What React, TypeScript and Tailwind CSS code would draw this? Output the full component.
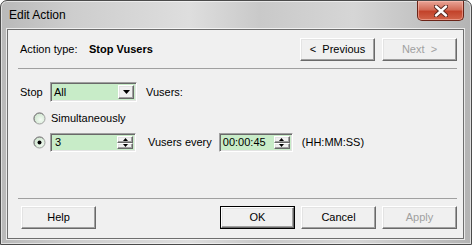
import React from 'react'
import clsx from 'clsx'

const raised =
    'border border-t-white border-l-white border-b-[#696969] border-r-[#696969] shadow-[inset_-1px_-1px_0_#a0a0a0,inset_1px_1px_0_#e3e3e3]'
const sunken =
    'border border-t-[#a0a0a0] border-l-[#a0a0a0] border-b-white border-r-white shadow-[inset_1px_1px_0_#696969,inset_-1px_-1px_0_#e3e3e3]'

function Btn({ children, disabled, def, className }: { children: React.ReactNode; disabled?: boolean; def?: boolean; className?: string }) {
    return (
        <div className={clsx('h-[23px] w-[75px] bg-[#f0f0f0]', def && 'border border-black', className)}>
            <div className={clsx('w-full h-full flex items-center justify-center text-[11px]', raised, disabled ? 'text-[#a0a0a0]' : 'text-black')}>
                {children}
            </div>
        </div>
    )
}

function SpinButtons() {
    return (
        <div className='flex flex-col w-[16px] h-full'>
            <div className={clsx('flex-1 flex items-center justify-center bg-[#f0f0f0]', raised)}>
                <svg width='5' height='3' viewBox='0 0 5 3'><path d='M2.5 0 L5 3 L0 3 Z' fill='#000' /></svg>
            </div>
            <div className={clsx('flex-1 flex items-center justify-center bg-[#f0f0f0]', raised)}>
                <svg width='5' height='3' viewBox='0 0 5 3'><path d='M0 0 L5 0 L2.5 3 Z' fill='#000' /></svg>
            </div>
        </div>
    )
}

function Radio({ checked }: { checked?: boolean }) {
    return (
        <svg width='13' height='13' viewBox='0 0 13 13'>
            <defs>
                <radialGradient id={checked ? 'rg1' : 'rg0'} cx='0.6' cy='0.6' r='0.6'>
                    <stop offset='0' stopColor='#f4fbf4' />
                    <stop offset='1' stopColor='#cfe6cf' />
                </radialGradient>
            </defs>
            <circle cx='6.5' cy='6.5' r='5.5' fill={`url(#${checked ? 'rg1' : 'rg0'})`} stroke='#a0a0a0' strokeWidth='1' />
            <path d='M2.6 10.4 A5.5 5.5 0 0 1 10.4 2.6' fill='none' stroke='#808080' strokeWidth='1' />
            {checked && <circle cx='6.5' cy='6.5' r='2' fill='#000' />}
        </svg>
    )
}

function CloseButton() {
    return (
        <div className='w-[47px] h-[20px] rounded-b-[5px] border border-[#6b2418] border-t-0 bg-[linear-gradient(to_bottom,#e9a597_0%,#d36c58_45%,#c3432b_55%,#d1644a_100%)] flex items-center justify-center shadow-[inset_0_0_0_1px_rgba(255,200,190,0.5)]'>
            <svg width='14' height='12' viewBox='0 0 14 12'>
                <path d='M2 1.5 L12 10.5 M12 1.5 L2 10.5' stroke='#5a2a22' strokeWidth='4.4' strokeLinecap='round' />
                <path d='M2 1.5 L12 10.5 M12 1.5 L2 10.5' stroke='#ffffff' strokeWidth='2.4' strokeLinecap='round' />
            </svg>
        </div>
    )
}

export default function App() {
    return (
        <div className='w-[472px] h-[245px] overflow-hidden' style={{ fontFamily: '"Liberation Sans", Arial, sans-serif' }}>
            <div className='w-full h-full flex flex-col rounded-t-[7px] border border-[#4b4b4b] bg-[linear-gradient(to_right,#b9b9b9_0%,#cdcdcd_15%,#dedede_40%,#c9c9c9_55%,#d6d6d6_75%,#b4b4b4_100%)] shadow-[inset_0_0_0_1px_rgba(255,255,255,0.55)]'>
                {/* title bar */}
                <div className='h-[28px] flex items-start justify-between'>
                    <span className='text-[12px] text-black pl-[8px] pt-[7px] leading-[14px]'>Edit Action</span>
                    <div className='mr-[7px]'>
                        <CloseButton />
                    </div>
                </div>

                {/* client area */}
                <div className='ml-[6px] w-[457px] h-[210px] border border-[#6e6e6e] bg-[#f0f0f0] shadow-[0_0_0_1px_rgba(255,255,255,0.7)] flex flex-col pl-[10px] pr-[6px] text-[11px] text-black'>
                    <div className='mt-[8px] flex items-center h-[23px]'>
                        <span className='ml-[2px] w-[69px]'>Action type:</span>
                        <span className='font-bold'>Stop Vusers</span>
                        <div className='ml-auto flex gap-[7px]'>
                            <Btn className='w-[74px]'>&lt;&nbsp; Previous</Btn>
                            <Btn className='w-[74px]' disabled>Next &nbsp;&gt;</Btn>
                        </div>
                    </div>
                    <div className='mt-[7px] h-px bg-[#a0a0a0]' />

                    <div className='mt-[13px] flex items-center h-[20px]'>
                        <span className='ml-[2px] w-[30px]'>Stop</span>
                        <div className={clsx('w-[87px] h-full bg-[#c8ecc8] flex items-center p-[2px]', sunken)}>
                            <span className='flex-1 pl-[1px]'>All</span>
                            <div className={clsx('w-[16px] h-full flex items-center justify-center bg-[#f0f0f0]', raised)}>
                                <svg width='7' height='4' viewBox='0 0 7 4'><path d='M0 0 L7 0 L3.5 4 Z' fill='#000' /></svg>
                            </div>
                        </div>
                        <span className='ml-[9px]'>Vusers:</span>
                    </div>

                    <div className='mt-[8px] flex items-center h-[16px] ml-[15px]'>
                        <Radio />
                        <span className='ml-[5px]'>Simultaneously</span>
                    </div>

                    <div className='mt-[7px] flex items-center h-[19px] ml-[15px]'>
                        <Radio checked />
                        <div className={clsx('ml-[4px] w-[86px] h-full bg-[#c8ecc8] flex items-center p-[2px]', sunken)}>
                            <span className='flex-1 pl-[2px]'>3</span>
                            <SpinButtons />
                        </div>
                        <span className='ml-[12px]'>Vusers every</span>
                        <div className={clsx('ml-[7px] w-[74px] h-full bg-[#c8ecc8] flex items-center p-[2px]', sunken)}>
                            <span className='flex-1 pl-[1px]'>00:00:45</span>
                            <SpinButtons />
                        </div>
                        <span className='ml-[9px]'>(HH:MM:SS)</span>
                    </div>

                    <div className='mt-[46px] h-px bg-[#a0a0a0]' />

                    <div className='mt-[7px] flex items-center h-[22px]'>
                        <Btn className='ml-[3px] h-[22px]'>Help</Btn>
                        <div className='ml-auto flex gap-[6px]'>
                            <Btn className='h-[22px]' def>OK</Btn>
                            <Btn className='h-[22px]'>Cancel</Btn>
                            <Btn className='h-[22px]' disabled>Apply</Btn>
                        </div>
                    </div>
                </div>
            </div>
        </div>
    )
}
